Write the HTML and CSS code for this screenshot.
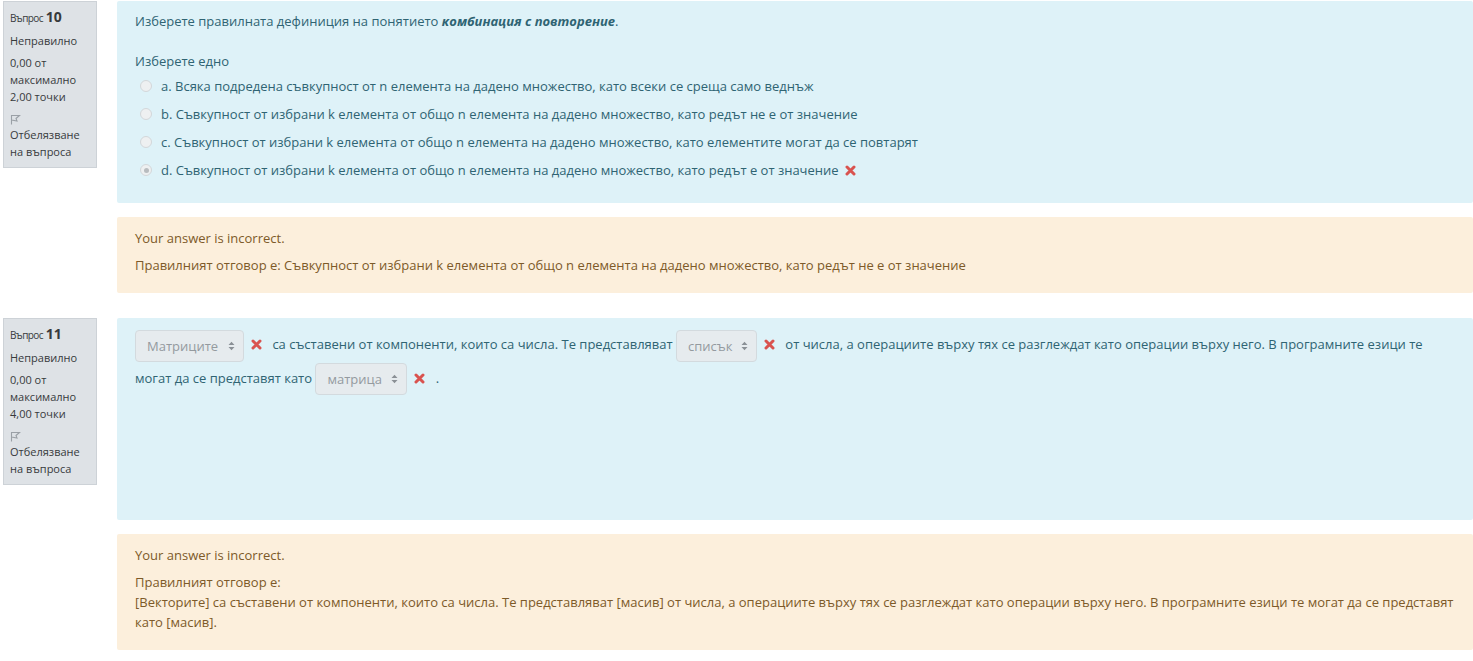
FILE: index.html
```html
<!DOCTYPE html>
<html lang="bg">
<head>
<meta charset="utf-8">
<title>Тест</title>
<link rel="stylesheet" href="styles.css">
</head>
<body>
<div class="que">
  <div class="info">
    <div class="no"><span class="lbl">Въпрос</span> <span class="qno">10</span></div>
    <div class="state">Неправилно</div>
    <div class="grade">0,00 от максимално 2,00 точки</div>
    <div class="flag"><svg width="11" height="11" viewBox="0 0 11 11"><path d="M1.5 1 L1.5 10.5 M1.5 1.5 L9.5 1.5 L6 4.5 L7 7 L1.5 6" fill="none" stroke="#9aa0a6" stroke-width="1.1"/></svg></div>
    <div class="flagtext">Отбелязване на въпроса</div>
  </div>
  <div class="content">
    <div class="formulation">
      <div class="qtext">Изберете правилната дефиниция на понятието <b><i>комбинация с повторение</i></b>.</div>
      <div class="prompt">Изберете едно</div>
      <div class="answer">
        <div class="opt"><span class="radio"></span>a. Всяка подредена съвкупност от n елемента на дадено множество, като всеки се среща само веднъж</div>
        <div class="opt"><span class="radio"></span>b. Съвкупност от избрани k елемента от общо n елемента на дадено множество, като редът не е от значение</div>
        <div class="opt"><span class="radio"></span>c. Съвкупност от избрани k елемента от общо n елемента на дадено множество, като елементите могат да се повтарят</div>
        <div class="opt"><span class="radio checked"></span>d. Съвкупност от избрани k елемента от общо n елемента на дадено множество, като редът е от значение <svg class="x" width="11" height="11" viewBox="0 0 11 11"><path d="M2 2 L9 9 M9 2 L2 9" stroke="#d9534f" stroke-width="3" stroke-linecap="round"/></svg></div>
      </div>
    </div>
    <div class="outcome">
      <div class="fb">Your answer is incorrect.</div>
      <div class="right">Правилният отговор е: Съвкупност от избрани k елемента от общо n елемента на дадено множество, като редът не е от значение</div>
    </div>
  </div>
</div>

<div class="que">
  <div class="info">
    <div class="no"><span class="lbl">Въпрос</span> <span class="qno">11</span></div>
    <div class="state">Неправилно</div>
    <div class="grade">0,00 от максимално 4,00 точки</div>
    <div class="flag"><svg width="11" height="11" viewBox="0 0 11 11"><path d="M1.5 1 L1.5 10.5 M1.5 1.5 L9.5 1.5 L6 4.5 L7 7 L1.5 6" fill="none" stroke="#9aa0a6" stroke-width="1.1"/></svg></div>
    <div class="flagtext">Отбелязване на въпроса</div>
  </div>
  <div class="content">
    <div class="formulation f2">
      <div class="qtext2"><span class="sel w1"><span class="val">Матриците</span><svg class="caret" width="7" height="10" viewBox="0 0 7 10"><path d="M0.5 4 L3.5 0.8 L6.5 4 Z M0.5 6 L3.5 9.2 L6.5 6 Z" fill="#8a9096"/></svg></span><svg class="x" width="11" height="11" viewBox="0 0 11 11"><path d="M2 2 L9 9 M9 2 L2 9" stroke="#d9534f" stroke-width="3" stroke-linecap="round"/></svg> са съставени от компоненти, които са числа. Те представляват <span class="sel w2"><span class="val">списък</span><svg class="caret" width="7" height="10" viewBox="0 0 7 10"><path d="M0.5 4 L3.5 0.8 L6.5 4 Z M0.5 6 L3.5 9.2 L6.5 6 Z" fill="#8a9096"/></svg></span><svg class="x" width="11" height="11" viewBox="0 0 11 11"><path d="M2 2 L9 9 M9 2 L2 9" stroke="#d9534f" stroke-width="3" stroke-linecap="round"/></svg> от числа, а операциите върху тях се разглеждат като операции върху него. В програмните езици те могат да се представят като <span class="sel w3"><span class="val">матрица</span><svg class="caret" width="7" height="10" viewBox="0 0 7 10"><path d="M0.5 4 L3.5 0.8 L6.5 4 Z M0.5 6 L3.5 9.2 L6.5 6 Z" fill="#8a9096"/></svg></span><svg class="x" width="11" height="11" viewBox="0 0 11 11"><path d="M2 2 L9 9 M9 2 L2 9" stroke="#d9534f" stroke-width="3" stroke-linecap="round"/></svg> .</div>
    </div>
    <div class="outcome">
      <div class="fb">Your answer is incorrect.</div>
      <div class="right">Правилният отговор е: <br>[Векторите] са съставени от компоненти, които са числа. Те представляват [масив] от числа, а операциите върху тях се разглеждат като операции върху него. В програмните езици те могат да се представят като [масив].</div>
    </div>
  </div>
</div>
</body>
</html>
```

FILE: styles.css
```css
body {
  margin: 1px 0 0 3px;
  font-family: "Open Sans", "Noto Sans", sans-serif;
  font-size: 13px;
  line-height: 20px;
  color: #2f6473;
  background: #fff;
}
.que {
  display: flex;
  align-items: flex-start;
  margin-bottom: 25px;
}
.info {
  flex: none;
  box-sizing: content-box;
  background: #dee2e6;
  border: 1px solid #cdd2d7;
  padding: 6px 0 7px 6px;
  width: 86px;
  color: #373a3c;
  font-size: 11px;
  line-height: 17px;
}
.no {
  line-height: 18px;
}
.lbl {
  font-size: 10px;
  letter-spacing: -0.6px;
}
.qno {
  font-size: 14px;
  font-weight: bold;
}
.state {
  margin-top: 5px;
}
.grade {
  margin-top: 5px;
  width: 80px;
}
.flag {
  margin-top: 9px;
  height: 12px;
  line-height: 10px;
}
.flagtext {
  margin-top: 0;
  width: 80px;
}
.content {
  flex: 1;
  margin-left: 20px;
}
.formulation {
  background: #def2f8;
  border-radius: 2px;
  padding: 10px 18px 23px 18px;
}
.prompt {
  margin-top: 20px;
}
.answer {
  margin-top: 5px;
}
.opt {
  display: flex;
  align-items: center;
  margin-bottom: 8px;
  padding-left: 5px;
}
.opt:last-child {
  margin-bottom: 0;
  margin-top: 1px;
}
.radio {
  width: 10px;
  height: 10px;
  border: 1px solid #d3d7da;
  border-radius: 50%;
  background: #eef0f1;
  margin-right: 9px;
  box-sizing: content-box;
  position: relative;
}
.radio.checked::after {
  content: "";
  position: absolute;
  left: 2.5px;
  top: 2.5px;
  width: 5px;
  height: 5px;
  border-radius: 50%;
  background: #b8bcbf;
}
.opt .x {
  margin-left: 6px;
}
.f2 {
  padding-top: 10px;
  min-height: 169px;
}
.qtext2 {
  line-height: 33px;
}
.sel {
  display: inline-flex;
  align-items: center;
  justify-content: space-between;
  box-sizing: border-box;
  height: 32px;
  vertical-align: middle;
  background: #e6ebee;
  border: 1px solid #d3dade;
  border-radius: 4px;
  padding: 0 8px 0 11px;
  color: #949a9f;
  line-height: 30px;
}
.w1 { width: 109px; }
.w2 { width: 81px; }
.w3 { width: 92px; }
.qtext2 .x {
  vertical-align: middle;
  margin: 0 7px 2px 7px;
}
.outcome {
  margin-top: 14px;
  background: #fcefdc;
  border-radius: 2px;
  color: #7d5a29;
  padding: 11px 18px 18px 18px;
}
.right {
  margin-top: 7px;
}
```
